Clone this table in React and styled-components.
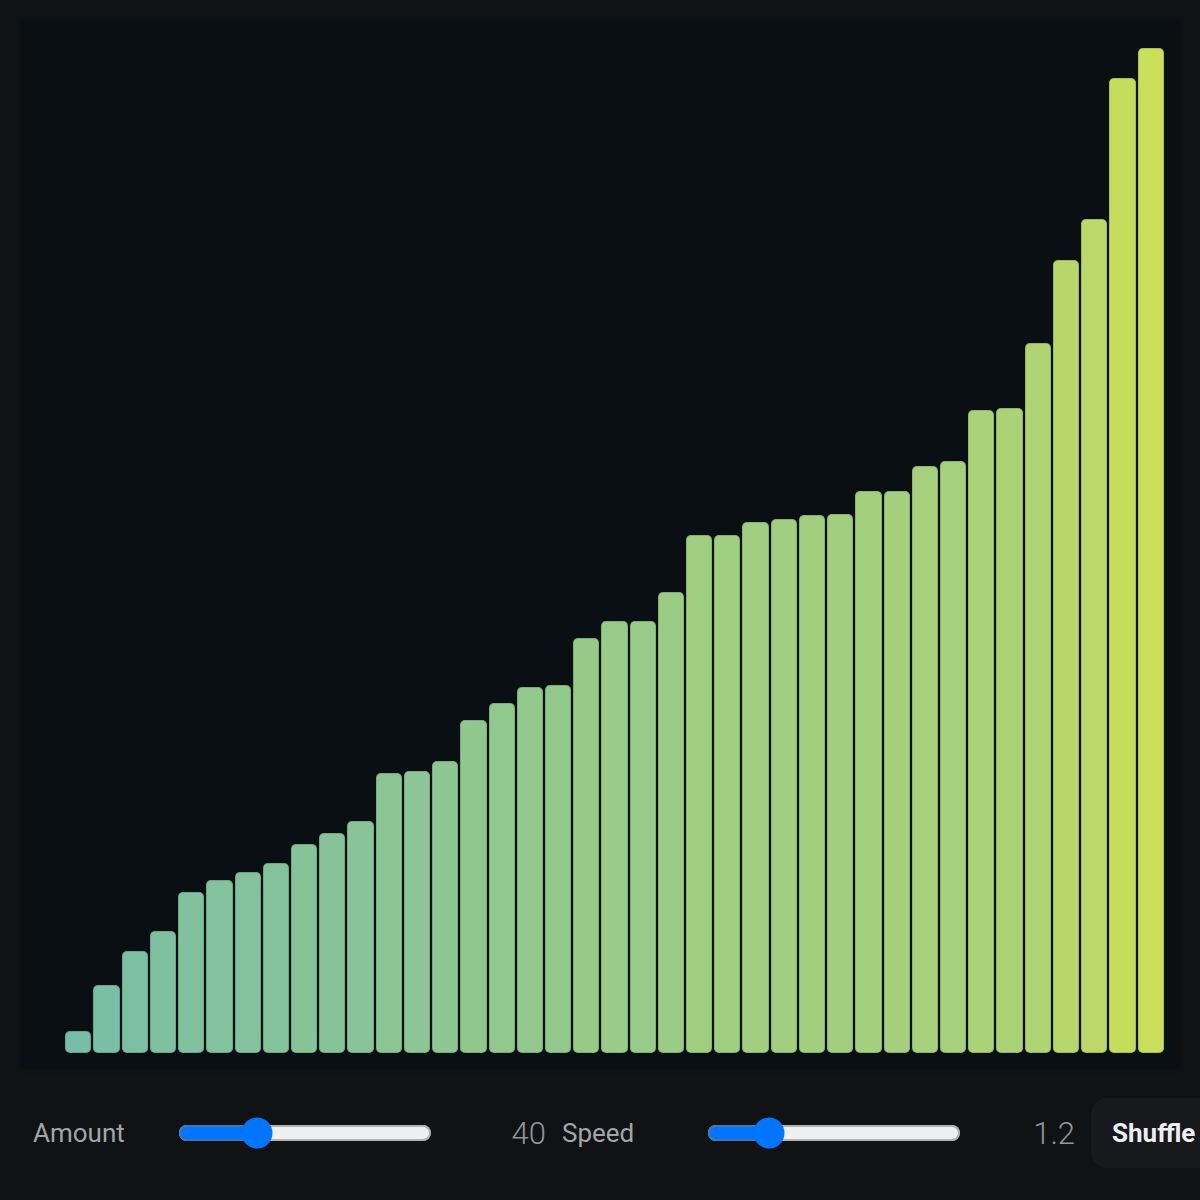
import React, { useState } from "react";
import styled, { createGlobalStyle } from "styled-components";

const Colors = {
  page: "#111214",
  panel: "#0a0f13",
  label: "#a2a6aa",
  value: "#8f969d",
  buttonBg: "#17191c",
  buttonText: "#eceef0",
};

// bar heights in px (chart area is 1016px tall), sorted ascending
const BAR_HEIGHTS = [
  0, 22, 68, 102, 122, 161, 173, 181, 190, 209, 220, 232, 280, 282, 292, 333,
  350, 366, 368, 415, 432, 432, 461, 518, 518, 531, 534, 538, 539, 562, 562,
  587, 592, 643, 645, 710, 793, 834, 975, 1005,
];
const CHART_HEIGHT = 1016;
const MAX_HEIGHT = Math.max(...BAR_HEIGHTS);

const LOW = [116, 188, 170];
const HIGH = [201, 222, 90];

// colour follows the bar's value, not its position
const barColor = (t) => {
  const c = LOW.map((v, j) => Math.round(v + (HIGH[j] - v) * t));
  return `rgb(${c.join(",")})`;
};

const GlobalStyle = createGlobalStyle`
  html, body {
    margin: 0;
    background: ${Colors.page};
    overflow: hidden;
  }
  body {
    font-family: Roboto, "Liberation Sans", sans-serif;
  }
`;

const Page = styled.div`
  width: 1200px;
  height: 1200px;
  box-sizing: border-box;
  padding: 21px 20px 0 21px;
  display: flex;
  flex-direction: column;
`;

const ChartPanel = styled.div`
  height: 1048px;
  box-sizing: border-box;
  padding: 16px;
  background: ${Colors.panel};
  box-shadow: 0 0 4px rgba(0, 0, 0, 0.35);
  display: flex;
  align-items: flex-end;
  gap: 2px;
`;

const Bar = styled.div`
  flex: 1;
  box-sizing: border-box;
  border-radius: 5px;
  box-shadow: inset 0 0 0 1px rgba(0, 0, 0, 0.14);
`;

const Controls = styled.div`
  margin-top: 29px;
  height: 70px;
  padding-left: 12px;
  display: flex;
  align-items: center;
  gap: 16px;
  white-space: nowrap;
`;

const Label = styled.span`
  width: 125px;
  flex-shrink: 0;
  font-size: 26px;
  color: ${Colors.label};
`;

const Slider = styled.input`
  zoom: 2;
  width: 127px;
  margin: 2px;
  flex-shrink: 0;
  accent-color: #0075ff;
`;

const Value = styled.span`
  width: 94px;
  flex-shrink: 0;
  text-align: right;
  font-size: 31px;
  font-weight: 300;
  color: ${Colors.value};
`;

const ShuffleButton = styled.button`
  flex-shrink: 0;
  height: 70px;
  padding: 0 21px;
  border: none;
  border-radius: 16px;
  background: ${Colors.buttonBg};
  color: ${Colors.buttonText};
  font-family: Roboto, "Liberation Sans", sans-serif;
  font-size: 26px;
  font-weight: 700;
  cursor: pointer;
`;

export default function App() {
  const [amount, setAmount] = useState(40);
  const [speed, setSpeed] = useState(1.2);

  return (
    <Page>
      <GlobalStyle />
      <ChartPanel>
        {BAR_HEIGHTS.map((h, i) => (
          <Bar
            key={i}
            style={{
              height: `${(h / CHART_HEIGHT) * 100}%`,
              background: barColor(h / MAX_HEIGHT),
            }}
          />
        ))}
      </ChartPanel>
      <Controls>
        <Label>Amount</Label>
        <Slider
          type="range"
          min={8}
          max={120}
          value={amount}
          onChange={(e) => setAmount(Number(e.target.value))}
        />
        <Value>{amount}</Value>
        <Label>Speed</Label>
        <Slider
          type="range"
          min={0.2}
          max={5}
          step={0.1}
          value={speed}
          onChange={(e) => setSpeed(Number(e.target.value))}
        />
        <Value>{speed.toFixed(1)}</Value>
        <ShuffleButton>Shuffle</ShuffleButton>
      </Controls>
    </Page>
  );
}
